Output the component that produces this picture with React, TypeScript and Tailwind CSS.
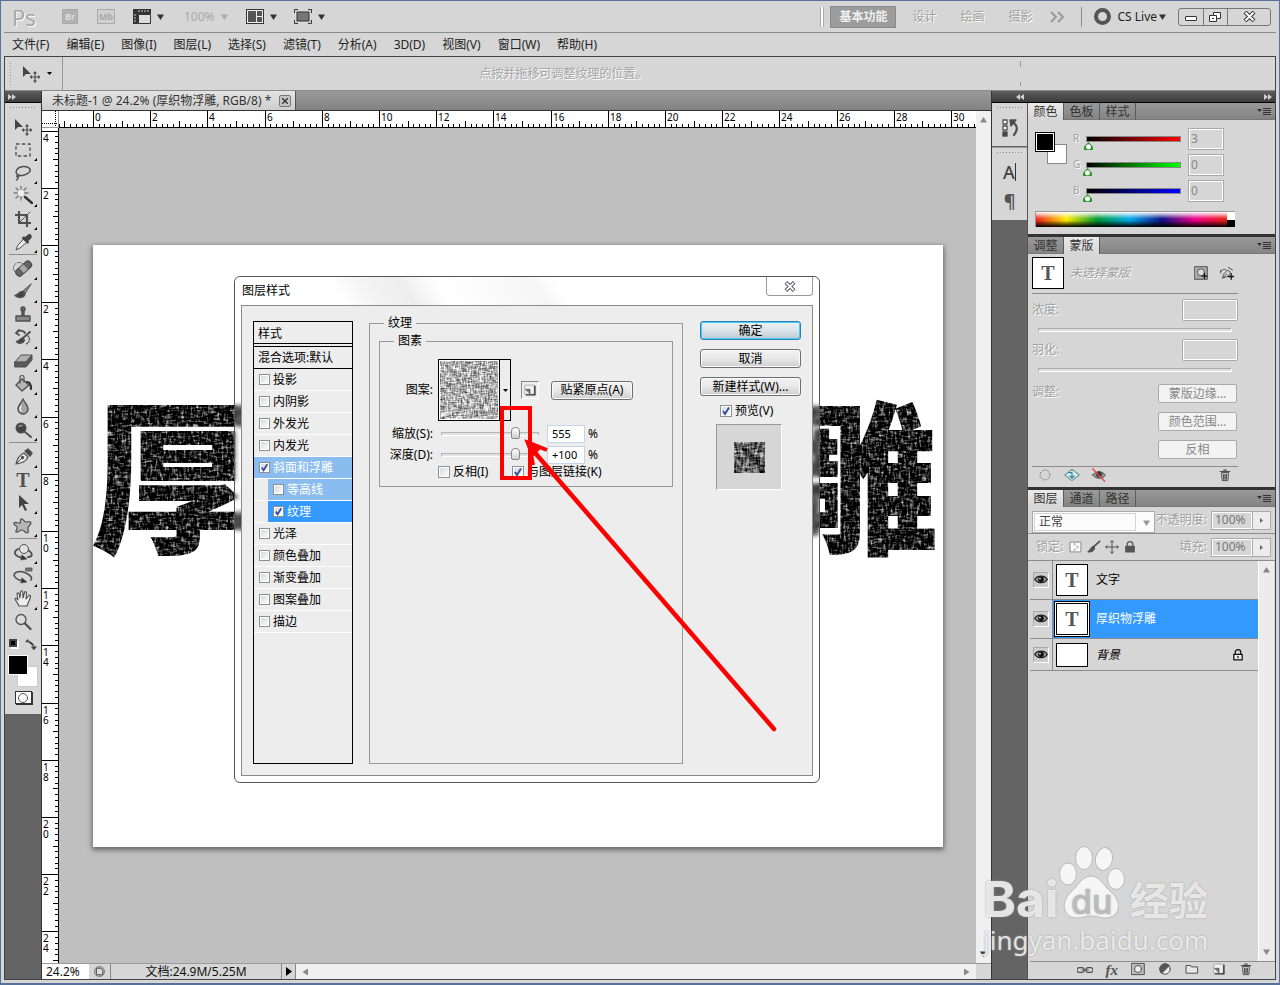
import { useState } from 'react';
import type { ReactNode } from 'react';

const MENUS = ['文件(F)', '编辑(E)', '图像(I)', '图层(L)', '选择(S)', '滤镜(T)', '分析(A)', '3D(D)', '视图(V)', '窗口(W)', '帮助(H)'];

const EFFECTS = [
  { name: '投影', checked: false, tone: 'plain', child: false },
  { name: '内阴影', checked: false, tone: 'plain', child: false },
  { name: '外发光', checked: false, tone: 'plain', child: false },
  { name: '内发光', checked: false, tone: 'plain', child: false },
  { name: '斜面和浮雕', checked: true, tone: 'parent', child: false },
  { name: '等高线', checked: false, tone: 'parent', child: true },
  { name: '纹理', checked: true, tone: 'active', child: true },
  { name: '光泽', checked: false, tone: 'plain', child: false },
  { name: '颜色叠加', checked: false, tone: 'plain', child: false },
  { name: '渐变叠加', checked: false, tone: 'plain', child: false },
  { name: '图案叠加', checked: false, tone: 'plain', child: false },
  { name: '描边', checked: false, tone: 'plain', child: false },
];

const TONES: Record<string, string> = {
  plain: '',
  parent: 'bg-[#8abcf0] text-white',
  active: 'bg-[#3399ff] text-white',
};

const CHANNELS = [
  { name: 'R', value: 3, track: '[&::-webkit-slider-runnable-track]:bg-[linear-gradient(to_right,#000,#f00)]' },
  { name: 'G', value: 0, track: '[&::-webkit-slider-runnable-track]:bg-[linear-gradient(to_right,#000,#0f0)]' },
  { name: 'B', value: 0, track: '[&::-webkit-slider-runnable-track]:bg-[linear-gradient(to_right,#000,#00f)]' },
];

// Distance in px between two numbered ruler marks
const STEP = 57.2;

const Icon = ({ children, size = 20, className = '' }: { children: ReactNode; size?: number; className?: string }) => (
  <svg
    width={size}
    height={size}
    viewBox="0 0 20 20"
    fill="none"
    stroke="#505050"
    strokeWidth="1.4"
    strokeLinecap="round"
    strokeLinejoin="round"
    className={`shrink-0 ${className}`}
  >
    {children}
  </svg>
);

const Caret = ({ className = 'text-[#333]' }: { className?: string }) => (
  <svg width="7" height="6" viewBox="0 0 7 6" className={`shrink-0 ${className}`}>
    <path d="M0 0.5h7L3.5 6z" fill="currentColor" />
  </svg>
);

const DoubleArrow = ({ flip = false }: { flip?: boolean }) => (
  <svg width="8" height="6" viewBox="0 0 8 6" className={flip ? 'rotate-180' : ''}>
    <path d="M0 0l4 3-4 3zM4 0l4 3-4 3z" fill="#d0d0d0" />
  </svg>
);

const Grip = () => (
  <div className="h-1 w-7 bg-[radial-gradient(#8a8a8a_1px,transparent_1px)] bg-[size:3px_3px]"></div>
);

const MoveGlyph = () => (
  <Icon>
    <path d="M2 2v11l3-3h5z" fill="#444" stroke="none" />
    <path d="M14 8v9M10 13h8M13 9l1-1 1 1M13 17l1 1 1-1M10.500 12l-1 1 1 1M17.500 12l1 1-1 1" strokeWidth="1.200" />
  </Icon>
);

const TOOL_GROUPS: { name: string; art: ReactNode; more?: boolean }[][] = [
  [
    { name: '移动工具', art: <MoveGlyph /> },
    { name: '矩形选框工具', more: true, art: <Icon><rect x="3" y="4" width="14" height="12" strokeDasharray="3.4 2.4" strokeLinecap="butt" /></Icon> },
    { name: '套索工具', more: true, art: <Icon><path d="M5 12C1 9 4 4 10 3.500c6-.5 9 3 6 6-3 3-8 3.500-11 2.500zM5 12c-2 0-1.500 2.500 0 2s1-2 0-2M4.500 14c1 1 .5 2-1 3" /></Icon> },
    {
      name: '魔棒工具', more: true,
      art: (
        <Icon>
          <circle cx="8" cy="7" r="4" fill="#eee" stroke="#aaa" strokeWidth=".8" />
          <path d="M8 0v3M8 11v3M1 7h3M12 7h3M3 2l2 2M13 2l-2 2M3 12l2-2" stroke="#777" strokeDasharray="1.500 1.200" />
          <path d="M12 11l7 6" stroke="#333" strokeWidth="2.400" />
        </Icon>
      ),
    },
    { name: '裁剪工具', more: true, art: <Icon><path d="M6 2v12h12M2 6h12v12" strokeWidth="2.200" strokeLinecap="butt" /><path d="M17 3L7 13" strokeWidth="1" /></Icon> },
    {
      name: '吸管工具', more: true,
      art: (
        <Icon>
          <path d="M11 7l3 3-7 6-4 2 1.500-4z" fill="#eee" strokeWidth="1" />
          <path d="M9.500 6l5 5 1-1-1-1 3-3c1.500-1.500 0-4-2-3l-3.500 3-1-1z" fill="#444" stroke="#444" />
        </Icon>
      ),
    },
  ],
  [
    {
      name: '污点修复画笔工具', more: true,
      art: (
        <Icon>
          <circle cx="6" cy="9" r="5.500" strokeWidth="1" strokeDasharray="1 1.600" />
          <g transform="rotate(-42 11 10)">
            <rect x="2" y="6" width="18" height="7" rx="3" fill="#666" />
            <rect x="8" y="6" width="6" height="7" fill="#aaa" strokeWidth=".6" />
          </g>
        </Icon>
      ),
    },
    { name: '画笔工具', more: true, art: <Icon><path d="M18 2l-8 7 2 2z" fill="#888" strokeWidth="1" /><path d="M9.500 9.500c-3-.5-4 3-7.500 4 3 3 9 2.500 10-1.500z" fill="#444" /></Icon> },
    { name: '仿制图章工具', more: true, art: <Icon><circle cx="10" cy="4" r="2" fill="#666" /><path d="M9 6h2v5H9z" fill="#555" /><path d="M3 11h14v5H3z" fill="#888" /></Icon> },
    {
      name: '历史记录画笔工具', more: true,
      art: (
        <Icon>
          <path d="M3 5c4-4 8-2 9 0M6 2L3 5l3 2" strokeWidth="1.800" />
          <path d="M17 4l-7 6" strokeWidth="2" />
          <path d="M9.500 10c-2 0-3 3-6 3.500 2 3 7 2 8-1.500z" fill="#444" />
          <path d="M15 8c3 3 1 7-2 8" strokeDasharray="1 1.800" />
        </Icon>
      ),
    },
    { name: '橡皮擦工具', more: true, art: <Icon><path d="M2 11l6-7h11l-6 7z" fill="#b0b0b0" strokeWidth="1" /><path d="M2 11h11l6-7v5l-6 7H2z" fill="#5a5a5a" strokeWidth="1" /></Icon> },
    {
      name: '油漆桶工具', more: true,
      art: (
        <Icon>
          <path d="M9 5l7 6-7 6-6-6z" fill="#b5b5b5" />
          <path d="M7 9V3c0-2 4-2 4 0v5" strokeWidth="1.200" />
          <path d="M14 8c3 0 4 3 4 7" strokeWidth="2.200" stroke="#333" />
        </Icon>
      ),
    },
    { name: '模糊工具', more: true, art: <Icon><path d="M10 2c2 4 5 7 5 10a5 5 0 01-10 0c0-3 3-6 5-10z" fill="#a5a5a5" /><path d="M8 9c-1 2-1 4 0 5" stroke="#eee" /></Icon> },
    { name: '减淡工具', more: true, art: <Icon><circle cx="8" cy="8" r="4.800" fill="#444" /><path d="M12 12l6 5" strokeWidth="2" /><path d="M6 6.500c1-1 2-1 3-1" stroke="#999" /></Icon> },
  ],
  [
    {
      name: '钢笔工具', more: true,
      art: (
        <Icon>
          <path d="M3 17c1-5 3-9 8-11l4 4c-2 5-6 6-12 7z" fill="#e4e4e4" strokeWidth="1.200" />
          <path d="M12 4l3-2 4 4-2 3z" fill="#444" />
          <path d="M3 17l6-6" strokeWidth="1" />
          <circle cx="9.500" cy="10.500" r="1" fill="#444" />
        </Icon>
      ),
    },
    { name: '横排文字工具', more: true, art: <span className="font-['Liberation_Serif',serif] text-xl leading-5 font-bold text-[#505050]">T</span> },
    { name: '路径选择工具', more: true, art: <Icon><path d="M6 2v13l3-3 3 6 2-1-3-6h5z" fill="#444" stroke="none" /></Icon> },
    { name: '自定形状工具', more: true, art: <Icon><path d="M8 3c2-1 3 3 5 3s5-1 5 1-3 3-3 5 1 5-1 5-3-3-5-3-5 3-6 2 2-3 1-5-4-2-3-4 5 1 6 0 0-3 1-4z" fill="#b5b5b5" strokeWidth="1.200" /></Icon> },
  ],
  [
    {
      name: '3D 对象旋转工具', more: true,
      art: (
        <Icon>
          <path d="M5 6c-6 3-3 8 6 9M15 7c6 4 4 7 0 7" strokeWidth="1.800" />
          <circle cx="11" cy="6" r="4.500" fill="#e2e2e2" strokeWidth="1" />
          <path d="M9 12l5 4-6 1z" fill="#333" strokeWidth=".6" />
        </Icon>
      ),
    },
    {
      name: '3D 旋转相机工具', more: true,
      art: (
        <Icon>
          <path d="M11 15C2 14-2 8 4 6s17 4 14 8" strokeWidth="1.600" />
          <path d="M9 12l5 4-6 1z" fill="#333" strokeWidth=".6" />
          <path d="M13 2h6v3h-6z" fill="#777" strokeWidth=".8" />
        </Icon>
      ),
    },
    { name: '抓手工具', more: true, art: <Icon><path d="M6 17c-1-3-4-6-4-7s2-1 3 1L4 5c0-1.500 2-1.500 2.200 0L7 9l.5-6c.1-1.600 2-1.600 2.200 0l.3 6 1.500-5.500c.5-1.400 2.200-1 2 .5L13 10l2.500-3c1-1.200 2.500-.2 2 1L14 17z" fill="#eee" strokeWidth="1.100" /></Icon> },
    { name: '缩放工具', art: <Icon><circle cx="8" cy="7.500" r="5" fill="#ddd" strokeWidth="1.300" /><path d="M12 11.500l5.500 5.500" strokeWidth="2.400" /></Icon> },
  ],
];

const EyeIcon = () => (
  <Icon size={14}>
    <path d="M1 9c4-6 14-6 18 0-3 6-13 7-18 0z" fill="#999" stroke="#222" strokeWidth="1.800" />
    <circle cx="10" cy="9" r="4" fill="#111" stroke="none" />
    <circle cx="8.500" cy="8" r="1.200" fill="#fff" stroke="none" />
  </Icon>
);

const LockIcon = ({ solid = false }: { solid?: boolean }) => (
  <Icon size={14}>
    <rect x="4" y="9" width="12" height="8" fill={solid ? '#555' : '#eee'} stroke={solid ? '#555' : '#111'} strokeWidth="1.800" />
    <path d="M6 9V6c0-5 8-5 8 0v3M10 12v2" stroke={solid ? '#555' : '#111'} strokeWidth="1.800" />
  </Icon>
);

const TrashIcon = () => (
  <Icon size={14}>
    <path d="M5 7l1 11h8l1-11z" fill="#ccc" />
    <path d="M3 5h14M8 3h4M8 9v7M10 9v7M12 9v7" strokeWidth="1.500" />
  </Icon>
);

const NewIcon = () => (
  <Icon size={14}>
    <path d="M3 3h13v13H3z" fill="#f2f2f2" stroke="#999" strokeWidth="1" />
    <path d="M4 9h6v6z" fill="#777" strokeWidth="1" />
    <path d="M17 4v13H4" stroke="#333" strokeWidth="2" strokeLinecap="butt" />
  </Icon>
);

const CheckBox = ({ id, label, checked = false, size = 'size-3' }: { id: string; label: string; checked?: boolean; size?: string }) => {
  const [on, setOn] = useState(checked);

  return (
    <span className="flex items-center gap-[3px]">
      <span className="relative flex shrink-0">
        <input
          id={id}
          type="checkbox"
          checked={on}
          onChange={() => setOn(!on)}
          className={`${size} appearance-none border border-[#8e8f8f] bg-linear-to-br from-[#d2d6da] to-white outline-1 -outline-offset-2 outline-white`}
        />
        {on && (
          <svg viewBox="0 0 12 12" className={`pointer-events-none absolute inset-0 ${size}`}>
            <path d="M3 6l2 3 4-6.500" fill="none" stroke="#3a4f9b" strokeWidth="2" />
          </svg>
        )}
      </span>
      <label htmlFor={id} className="leading-3 whitespace-nowrap">{label}</label>
    </span>
  );
};

const DialogButton = ({ children, primary = false, className = '' }: { children: ReactNode; primary?: boolean; className?: string }) => (
  <button
    className={`flex h-[19px] items-center justify-center rounded-[3px] border leading-4 whitespace-nowrap ${
      primary
        ? 'border-[#2f80b4] bg-linear-to-b from-[#eaf2f6] via-[#dbe3e8] to-[#bcc9d2] shadow-[inset_0_0_0_1px_#48cdf5]'
        : 'border-[#707070] bg-linear-to-b from-[#f2f2f2] via-[#e8e8e8] to-[#cfcfcf] shadow-[inset_0_0_0_1px_#fbfbfb]'
    } ${className}`}
  >
    {children}
  </button>
);

const AppBar = () => (
  <header className="flex h-8 items-center border-b border-[#8c8c8c] pr-[5px] pl-2">
    <span className="w-[50px] font-['Open_Sans',sans-serif] text-[22px] leading-7 text-[#a5a5a5] [text-shadow:1px_1px_0_#fff]">Ps</span>
    <button className="mr-[19px] h-[15px] w-4 border border-[#aaa] bg-[#b2b2b2] text-[9px] leading-3 font-bold text-[#dedede]">Br</button>
    <button className="mr-[18px] h-[15px] w-[18px] border border-[#aaa] bg-[#d0d0d0] text-[9px] leading-3 font-bold text-[#aaa]">Mb</button>
    <button aria-label="查看额外内容" className="mr-5 flex items-center gap-1.5">
      <svg width="18" height="15" viewBox="0 0 18 15">
        <path d="M0 0h18v5H5v10H0z" fill="#333" />
        <path d="M5.500 5.500h12v9h-12z" fill="#ddd" stroke="#333" />
        <path d="M6 1v2M9 1v2M12 1v2M15 1v2M1 6h2M1 9h2M1 12h2" stroke="#ccc" />
      </svg>
      <Caret />
    </button>
    <button className="mr-[18px] flex items-center gap-1.5 text-[#a8a8a8]">
      100% <Caret className="text-[#aaa]" />
    </button>
    <button aria-label="排列文档" className="mr-[17px] flex items-center gap-1.5">
      <svg width="18" height="15" viewBox="0 0 18 15">
        <rect x=".5" y=".5" width="17" height="14" fill="#eee" stroke="#333" />
        <path d="M2 2h8v11H2zM11 2h5v5h-5zM11 8h5v5h-5z" fill="#555" />
      </svg>
      <Caret />
    </button>
    <button aria-label="屏幕模式" className="flex items-center gap-1.5">
      <svg width="18" height="15" viewBox="0 0 18 15">
        <path d="M.5 4V.5H4M14 .5h3.500V4M17.500 11v3.500H14M4 14.500H.5V11" fill="none" stroke="#333" />
        <rect x="3" y="3" width="12" height="9" fill="#777" stroke="#333" />
      </svg>
      <Caret />
    </button>

    <div className="ml-auto flex items-center">
      <div className="mr-1.5 h-5 w-1 border-x border-[#aaa] bg-white"></div>
      <button className="mr-4 h-[22px] w-[66px] border border-[#8a8a8a] bg-[#9c9c9c] font-bold text-[#f0f0f0]">基本功能</button>
      <button className="mr-6 text-[#a0a0a0] [text-shadow:1px_1px_0_#fff]">设计</button>
      <button className="mr-6 text-[#a0a0a0] [text-shadow:1px_1px_0_#fff]">绘画</button>
      <button className="mr-[18px] text-[#a0a0a0] [text-shadow:1px_1px_0_#fff]">摄影</button>
      <svg width="15" height="12" viewBox="0 0 15 12" className="mr-4">
        <path d="M1 1l5 5-5 5M8 1l5 5-5 5" fill="none" stroke="#999" strokeWidth="2" />
      </svg>
      <div className="mr-3 h-5 w-px bg-[#8c8c8c]"></div>
      <div className="mr-1.5 size-[17px] rounded-full border-4 border-[#555]"></div>
      <button className="mr-3 flex items-center gap-0.5 text-[#222]">CS Live <Caret /></button>
      <div className="flex h-[18px] w-[93px] rounded-[3px] border border-[#777]">
        <button aria-label="最小化" className="grid flex-1 place-items-center border-r border-[#777]">
          <span className="mt-1 h-[5px] w-3 rounded-[1px] border border-[#333] bg-white"></span>
        </button>
        <button aria-label="还原" className="grid flex-1 place-items-center border-r border-[#777]">
          <svg width="12" height="12" viewBox="0 0 12 12" fill="#fff" stroke="#333">
            <path d="M4.500 1.500h7v6h-7z" />
            <path d="M.5 4.500h7v6h-7zM3 7.500h2" />
          </svg>
        </button>
        <button aria-label="关闭" className="grid w-[42px] place-items-center">
          <svg width="13" height="11" viewBox="0 0 13 11">
            <path d="M2 1l9 9M11 1l-9 9" stroke="#333" strokeWidth="4" />
            <path d="M2.500 1.500l8 8M10.500 1.500l-8 8" stroke="#fff" strokeWidth="2" />
          </svg>
        </button>
      </div>
    </div>
  </header>
);

const Toolbox = () => (
  <aside className="flex w-[37px] shrink-0 flex-col border-r border-[#333] bg-[#646464]">
    <div className="flex h-3 items-center border-b border-black bg-linear-to-b from-[#5e5e5e] to-[#3c3c3c] px-[3px]">
      <DoubleArrow />
    </div>
    <div className="flex flex-col items-center bg-[#d6d6d6] pt-[3px] pb-2.5">
      <Grip />
      <div className="h-[5px]"></div>
      {TOOL_GROUPS.map((group, i) => (
        <div key={i} className={`flex flex-col items-center ${i ? 'mt-px border-t border-[#8c8c8c] pt-0.5' : ''}`}>
          {group.map((tool) => (
            <button key={tool.name} aria-label={tool.name} className="relative grid h-[23px] w-7 place-items-center">
              {tool.art}
              {tool.more && (
                <svg width="3" height="3" viewBox="0 0 3 3" className="absolute right-0 bottom-0">
                  <path d="M3 0v3H0z" fill="#000" />
                </svg>
              )}
            </button>
          ))}
        </div>
      ))}
      <div className="mt-1.5 flex w-7 justify-between">
        <span className="flex size-2.5">
          <span className="size-2 border-2 border-[#444] bg-black shadow-[2px_2px_0_#fff]"></span>
        </span>
        <Icon size={12}>
          <path d="M4 1L1 5h7zM4 4c8 0 10 4 11 9M11 13h8l-4 5z" fill="#333" strokeWidth="1" />
        </Icon>
      </div>
      <div className="relative mt-1 h-8 w-[30px]">
        <span className="absolute right-0 bottom-0 size-[21px] border border-[#ccc] bg-white"></span>
        <span className="absolute top-0 left-0 size-5 border border-white bg-black"></span>
      </div>
      <button aria-label="以快速蒙版模式编辑" className="mt-1 grid h-[13px] w-[17px] place-items-center border border-[#333] bg-white shadow-[1px_1px_0_#333]">
        <span className="size-2.5 rounded-full border border-[#555]"></span>
      </button>
    </div>
  </aside>
);

const HorizontalRuler = () => (
  <svg width="100%" height="17" className="block bg-white font-['Noto_Sans',sans-serif] text-[10px]">
    {[...Array(165)].map((_, i) => {
      const n = i - 6;
      const x = Math.round(34 + (n * STEP) / 10) + 0.5;
      const top = n % 10 === 0 ? 0 : n % 5 === 0 ? 10 : 13;
      return <path key={i} d={`M${x} ${top}V17`} stroke="#000" />;
    })}
    {[...Array(16)].map((_, i) => (
      <text key={i} x={Math.round(36 + i * STEP)} y="10">{i * 2}</text>
    ))}
    <path d="M0 16.500h2000" stroke="#000" />
  </svg>
);

const VerticalRuler = () => (
  <svg width="17" height="100%" className="block w-[17px] shrink-0 bg-white font-['Noto_Sans',sans-serif] text-[10px]">
    {[...Array(146)].map((_, i) => {
      const n = i - 20;
      const y = Math.round(117 + (n * STEP) / 10) + 0.5;
      const left = n % 10 === 0 ? 0 : n % 5 === 0 ? 11 : 13;
      return <path key={i} d={`M${left} ${y}H17`} stroke="#000" />;
    })}
    {[...Array(15)].map((_, i) => {
      const n = i - 2;
      return String(Math.abs(n * 2)).split('').map((digit, d) => (
        <text key={`${i}-${d}`} x="1" y={Math.round(128 + n * STEP + d * 10)}>{digit}</text>
      ));
    })}
    <path d="M16.500 0v2000" stroke="#000" />
  </svg>
);

// Woven noise used by the headline and by the pattern swatches
const FabricFilters = () => (
  <svg width="0" height="0" className="absolute">
    <filter id="fabric-dark" x="0" y="0" width="100%" height="100%" colorInterpolationFilters="sRGB">
      <feTurbulence type="fractalNoise" baseFrequency="0.450 0.140" numOctaves="2" seed="3" result="v" />
      <feTurbulence type="fractalNoise" baseFrequency="0.140 0.450" numOctaves="2" seed="8" result="h" />
      <feComposite in="v" in2="h" operator="arithmetic" k1="0" k2="0.5" k3="0.5" k4="0" />
      <feColorMatrix values="2.600 0 0 0 -1.220  2.600 0 0 0 -1.220  2.600 0 0 0 -1.220  0 0 0 0 1" />
      <feComposite in2="SourceAlpha" operator="in" />
    </filter>
    <filter id="fabric-light" x="0" y="0" width="100%" height="100%" colorInterpolationFilters="sRGB">
      <feTurbulence type="fractalNoise" baseFrequency="0.700 0.180" numOctaves="2" seed="3" result="v" />
      <feTurbulence type="fractalNoise" baseFrequency="0.180 0.700" numOctaves="2" seed="8" result="h" />
      <feComposite in="v" in2="h" operator="arithmetic" k1="0" k2="0.5" k3="0.5" k4="0" />
      <feColorMatrix values="1.800 0 0 0 -0.220  1.800 0 0 0 -0.220  1.800 0 0 0 -0.220  0 0 0 0 1" />
    </filter>
    <filter id="fabric-mid" x="0" y="0" width="100%" height="100%" colorInterpolationFilters="sRGB">
      <feTurbulence type="fractalNoise" baseFrequency="0.450 0.120" numOctaves="2" seed="3" result="v" />
      <feTurbulence type="fractalNoise" baseFrequency="0.120 0.450" numOctaves="2" seed="8" result="h" />
      <feComposite in="v" in2="h" operator="arithmetic" k1="0" k2="0.5" k3="0.5" k4="0" />
      <feColorMatrix values="2.200 0 0 0 -0.750  2.200 0 0 0 -0.750  2.200 0 0 0 -0.750  0 0 0 0 1" />
    </filter>
  </svg>
);

const DocumentArea = () => (
  <main className="flex min-w-0 flex-1 flex-col">
    <div className="flex h-5 items-stretch border-b border-[#333] bg-linear-to-b from-[#9a9a9a] to-[#828282]">
      <div className="flex items-center gap-2 border-r border-[#555] bg-linear-to-b from-[#e4e4e4] to-[#cdcdcd] pr-1 pl-2.5 text-[#333]">
        <span className="whitespace-nowrap">未标题-1 @ 24.2% (厚织物浮雕, RGB/8) *</span>
        <button aria-label="关闭文档" className="grid size-3 place-items-center rounded-[2px] border border-[#777] bg-[#c4c4c4]">
          <svg width="6" height="6" viewBox="0 0 6 6"><path d="M0 0l6 6M6 0L0 6" stroke="#333" strokeWidth="1.300" /></svg>
        </button>
      </div>
    </div>
    <div className="flex min-h-0 flex-1">
      <div className="flex min-w-0 flex-1 flex-col">
        <div className="flex">
          <svg width="17" height="17" className="shrink-0 bg-white">
            <path d="M13.500 0v17M0 12.500h17" stroke="#000" strokeDasharray="1 1" />
            <path d="M16.500 0v17M0 16.500h17" stroke="#999" />
          </svg>
          <HorizontalRuler />
        </div>
        <div className="flex min-h-0 flex-1">
          <VerticalRuler />
          <div className="grid min-w-0 flex-1 place-items-center overflow-hidden bg-[#bfbfbf]">
            <div className="h-[602px] w-[850px] bg-white shadow-[0_2px_5px_1px_#666]">
              <svg width="100%" height="100%" viewBox="0 0 850 602" className="overflow-visible font-['Noto_Sans_CJK_SC',sans-serif] text-[165px] font-black">
                <text x="-2" y="296" filter="url(#fabric-dark)">厚</text>
                <text x="680" y="296" filter="url(#fabric-dark)">雕</text>
              </svg>
            </div>
          </div>
        </div>
      </div>
      <div className="flex w-[15px] shrink-0 flex-col items-center justify-between bg-[#f0f0f0] py-1.5 text-[#888]">
        <Caret className="rotate-180" />
        <Caret />
      </div>
    </div>
    <footer className="flex h-4 items-stretch border-t border-[#999] bg-[#d6d6d6] text-[#111]">
      <input aria-label="缩放比例" defaultValue="24.2%" className="w-[47px] bg-white pl-1 text-xs leading-3" />
      <span className="grid w-[22px] place-items-center border-r border-[#888]">
        <Icon size={13}><circle cx="10" cy="10" r="8" fill="#aaa" stroke="#888" /><path d="M6 5h6l3 4v6H6z" fill="#ddd" /></Icon>
      </span>
      <span className="flex w-[171px] items-center justify-center border-r border-[#888] leading-3">文档:24.9M/5.25M</span>
      <button aria-label="显示状态" className="grid w-3.5 place-items-center border-r border-[#888]">
        <svg width="6" height="9" viewBox="0 0 6 9"><path d="M0 0l6 4.500L0 9z" /></svg>
      </button>
      <div className="flex flex-1 items-center justify-between bg-[#f0f0f0] px-1.5 text-[#888]">
        <Caret className="rotate-90" />
        <Caret className="-rotate-90" />
      </div>
      <div className="w-[15px]"></div>
    </footer>
  </main>
);

const PanelTabs = ({ tabs, active }: { tabs: string[]; active: string }) => (
  <div className="flex h-[17px] border-b border-[#777] bg-linear-to-b from-[#9a9a9a] to-[#848484]">
    {tabs.map((tab) => (
      <button
        key={tab}
        className={`h-[17px] w-9 border-r border-[#5c5c5c] leading-[18px] text-[#333] ${tab === active ? 'bg-linear-to-b from-[#eaeaea] to-[#d6d6d6]' : ''}`}
      >
        {tab}
      </button>
    ))}
    <button aria-label="面板菜单" className="mr-1 ml-auto">
      <svg width="14" height="9" viewBox="0 0 14 9">
        <path d="M0 2h5L2.500 5z" fill="#333" />
        <path d="M6 1.500h8M6 3.500h8M6 5.500h8M6 7.500h8" stroke="#333" />
      </svg>
    </button>
  </div>
);

const ColorPanel = () => (
  <section className="flex h-[131px] flex-col">
    <PanelTabs tabs={['颜色', '色板', '样式']} active="颜色" />
    <div className="flex-1 px-[7px] pt-2">
      <div className="flex">
        <div className="relative mt-1 h-8 w-[38px]">
          <span className="absolute top-3 left-3 size-5 border border-[#888] bg-white"></span>
          <span className="absolute top-0 left-0 size-5 border border-black bg-black outline-1 -outline-offset-2 outline-white"></span>
        </div>
        <div className="space-y-1">
          {CHANNELS.map((c) => (
            <div key={c.name} className="flex h-[22px] items-center">
              <label htmlFor={`channel-${c.name}`} className="w-[10px] text-[10px] text-[#a0a0a0] [text-shadow:1px_1px_0_#fff]">{c.name}</label>
              <input
                id={`channel-${c.name}`}
                type="range"
                min="0"
                max="255"
                defaultValue={c.value}
                className={`mr-1 h-[22px] w-[101px] appearance-none bg-transparent [&::-webkit-slider-runnable-track]:mx-[3px] [&::-webkit-slider-runnable-track]:h-1.5 [&::-webkit-slider-runnable-track]:border [&::-webkit-slider-runnable-track]:border-[#888] [&::-webkit-slider-thumb]:-ml-1 [&::-webkit-slider-thumb]:mt-[5px] [&::-webkit-slider-thumb]:h-2 [&::-webkit-slider-thumb]:w-[9px] [&::-webkit-slider-thumb]:appearance-none [&::-webkit-slider-thumb]:bg-[radial-gradient(circle_at_50%_60%,#fff_30%,#2a9a2a_45%)] [&::-webkit-slider-thumb]:[clip-path:polygon(50%_0,100%_60%,100%_100%,0_100%,0_60%)] ${c.track}`}
              />
              <input aria-label={c.name} defaultValue={c.value} className="h-[22px] w-9 border border-[#aaa] bg-[#d6d6d6] pb-0.5 pl-0.5 text-[#888] outline-1 -outline-offset-2 outline-white" />
            </div>
          ))}
        </div>
      </div>
      <div className="mt-[9px] flex h-4 w-[200px] border-t border-l border-[#999]">
        <div className="flex-1 bg-[linear-gradient(to_bottom,#fff,transparent_45%,transparent_55%,#000),linear-gradient(to_right,#e22,#fe0_16%,#093_32%,#0ae_49%,#118_66%,#e08_83%,#e21)]"></div>
        <div className="w-2 bg-[linear-gradient(#fff_50%,#000_50%)]"></div>
      </div>
    </div>
  </section>
);

const MaskButton = ({ children }: { children: ReactNode }) => (
  <button className="h-[19px] w-[79px] rounded-[2px] border border-[#aaa] bg-[#f3f3f3] leading-4 text-[#888]">{children}</button>
);

const MaskPanel = () => (
  <section className="flex h-[250px] flex-col">
    <PanelTabs tabs={['调整', '蒙版']} active="蒙版" />
    <div className="w-[210px] flex-1 pt-[3px] pl-1">
      <div className="flex items-center">
        <div className="grid size-8 place-items-center border border-black bg-white font-['Liberation_Serif',serif] text-xl font-bold text-[#555]">T</div>
        <span className="ml-1.5 flex-1 text-[#a0a0a0] italic [text-shadow:1px_1px_0_#fff]">未选择蒙版</span>
        <button aria-label="添加像素蒙版" className="mr-3">
          <Icon size={14}>
            <rect x="1" y="1" width="18" height="18" fill="#aaa" />
            <circle cx="10" cy="9" r="5" fill="#ddd" />
            <path d="M15 11v7M11.500 14.500h7" stroke="#111" strokeWidth="1.800" />
          </Icon>
        </button>
        <button aria-label="添加矢量蒙版" className="mr-1">
          <Icon size={14}>
            <path d="M1 8c3-4 6-4 8-2M12 2l6 4M4 17c0-5 3-8 7-11l4 3c-1 5-5 7-11 8zM4 17l6-6M1 6v4" />
            <path d="M16 11v8M12 15h8" stroke="#111" strokeWidth="1.800" />
          </Icon>
        </button>
      </div>
      <div className="mt-1 border-t border-[#8c8c8c] pt-[5px] text-[#a0a0a0] [text-shadow:1px_1px_0_#fff]">
        {['浓度:', '羽化:'].map((name, i) => (
          <div key={name} className="h-10">
            <div className="flex items-center justify-between">
              <label htmlFor={`mask-value-${i}`}>{name}</label>
              <input id={`mask-value-${i}`} disabled className="h-[22px] w-14 rounded-[2px] border border-[#aaa] bg-[#d6d6d6] outline-1 -outline-offset-2 outline-white" />
            </div>
            <input
              type="range"
              disabled
              aria-label={name}
              className="mx-1.5 mt-[7px] block h-1 w-[194px] appearance-none border border-[#aaa] border-r-white border-b-white bg-[#dde0e0] [&::-webkit-slider-thumb]:size-0 [&::-webkit-slider-thumb]:appearance-none"
            />
          </div>
        ))}
        <div className="flex justify-between pt-[5px]">
          <span>调整:</span>
          <div className="mr-px flex flex-col gap-[9px] [text-shadow:none]">
            <MaskButton>蒙版边缘...</MaskButton>
            <MaskButton>颜色范围...</MaskButton>
            <MaskButton>反相</MaskButton>
          </div>
        </div>
      </div>
      <div className="mt-[7px] flex items-center gap-3 border-t border-[#8c8c8c] px-1.5">
        <Icon size={14}><circle cx="10" cy="10" r="7" strokeDasharray="1.500 2.500" stroke="#777" /></Icon>
        <Icon size={16}>
          <path d="M1 10l9-7 9 7-9 7z" fill="#dff0ea" stroke="#6b9b8c" />
          <path d="M6 7h4v6M7 11l3 3 3-3" stroke="#27a" />
        </Icon>
        <Icon size={14}>
          <path d="M1 10c4-6 14-6 18 0-3 6-13 7-18 0z" fill="#999" />
          <circle cx="10" cy="9" r="4" fill="#333" />
          <path d="M1 1l17 18" stroke="#e44" strokeWidth="1.800" />
        </Icon>
        <span className="ml-auto"><TrashIcon /></span>
      </div>
    </div>
  </section>
);

const PercentField = ({ id, label }: { id: string; label: string }) => (
  <div className="flex items-center gap-1">
    <label htmlFor={id} className="whitespace-nowrap text-[#a0a0a0] [text-shadow:1px_1px_0_#fff]">{label}</label>
    <div className="flex h-[19px] w-[60px] border border-[#aaa]">
      <input id={id} defaultValue="100%" className="w-10 border border-white bg-[#d6d6d6] pl-0.5 text-xs text-[#777]" />
      <button aria-label={`${label}滑块`} className="grid flex-1 place-items-center border-l border-[#aaa] bg-[#ececec]">
        <svg width="3" height="5" viewBox="0 0 3 5"><path d="M0 0l3 2.500L0 5z" fill="#666" /></svg>
      </button>
    </div>
  </div>
);

const LAYERS = [
  { name: '文字', text: true },
  { name: '厚织物浮雕', text: true },
  { name: '背景', text: false },
];

const LayersPanel = () => {
  const [selected, setSelected] = useState('厚织物浮雕');

  return (
    <section className="flex min-h-0 flex-1 flex-col">
      <PanelTabs tabs={['图层', '通道', '路径']} active="图层" />
      <div className="flex h-[27px] items-center justify-between border-b border-[#8c8c8c] pr-1 pl-1">
        <div className="relative mt-1 flex h-[22px] w-[123px] border border-[#aaa] bg-[#fcfcfc]">
          <select aria-label="混合模式" className="w-full appearance-none pl-1.5 text-[#444]">
            <option>正常</option>
          </select>
          <span className="pointer-events-none absolute inset-y-px left-px w-[102px] border border-[#d4d4d4]"></span>
          <Caret className="pointer-events-none absolute top-2 right-1 text-[#999]" />
        </div>
        <PercentField id="opacity" label="不透明度:" />
      </div>
      <div className="flex h-[27px] items-center justify-between border-b border-[#8c8c8c] pr-1 pl-2">
        <div className="flex items-center gap-1">
          <span className="mr-0.5 text-[#a0a0a0] [text-shadow:1px_1px_0_#fff]">锁定:</span>
          <Icon size={14}><rect x="2" y="3" width="15" height="14" fill="#fff" stroke="#888" /><path d="M6 4h4v4H6zM10 8h4v4h-4zM6 12h4v4H6z" fill="#ccc" stroke="none" /></Icon>
          <Icon size={14}><path d="M18 2L8 11" strokeWidth="2.500" /><path d="M9 9c-3 0-4 5-8 8 5 1 9-1 10-5z" fill="#555" /></Icon>
          <Icon size={14}><path d="M10 1v18M1 10h18M8 3l2-2 2 2M8 17l2 2 2-2M3 8l-2 2 2 2M17 8l2 2-2 2" /></Icon>
          <LockIcon solid />
        </div>
        <PercentField id="fill" label="填充:" />
      </div>
      <div className="flex min-h-0 flex-1 pl-0.5">
        <ul className="flex-1">
          {LAYERS.map((layer) => (
            <li key={layer.name} className="flex border-b border-[#8c8c8c]">
              <button aria-label="可见性" className="grid w-[23px] place-items-center border-r border-[#8c8c8c]">
                <span className="grid size-4 place-items-center border border-[#aaa] border-r-white border-b-white bg-[#ccc]"><EyeIcon /></span>
              </button>
              <button
                onClick={() => setSelected(layer.name)}
                className={`flex flex-1 items-center px-[3px] text-left ${layer.text ? 'h-[38px]' : 'h-[31px]'} ${selected === layer.name ? 'bg-[#3399ff] text-white' : 'text-black'}`}
              >
                <span
                  className={`grid w-8 place-items-center border border-black bg-white font-['Liberation_Serif',serif] text-xl font-bold text-[#555] ${layer.text ? 'h-8' : 'h-6'} ${selected === layer.name ? 'ring-1 ring-white outline-1 outline-offset-1 outline-black' : ''}`}
                >
                  {layer.text ? 'T' : ''}
                </span>
                <span className={`ml-2 flex-1 ${layer.text ? '' : 'italic'}`}>{layer.name}</span>
                {!layer.text && <span className="mr-2.5"><LockIcon /></span>}
              </button>
            </li>
          ))}
        </ul>
        <div className="mr-px flex w-4 flex-col items-center justify-between border-l border-white bg-[#ececec] py-1.5">
          <Caret className="rotate-180 text-[#888]" />
          <Caret className="text-[#888]" />
        </div>
      </div>
      <div className="ml-0.5 flex h-[18px] items-start justify-end gap-[13px] border-t border-[#8c8c8c] pr-[22px]">
        <Icon size={16}><rect x="0" y="7" width="9" height="6" rx="3" /><rect x="11" y="7" width="9" height="6" rx="3" /><path d="M6 10h8" /></Icon>
        <span className="font-['Liberation_Serif',serif] text-[15px] leading-4 font-bold text-[#555] italic">fx</span>
        <Icon size={14}><rect x="1" y="2" width="18" height="16" fill="#bbb" /><circle cx="10" cy="10" r="5" fill="#eee" /></Icon>
        <Icon size={14}><circle cx="10" cy="10" r="7.500" fill="#eee" /><path d="M16 5A7.500 7.500 0 105 16z" fill="#555" /></Icon>
        <Icon size={14}><path d="M2 5h6l1 2h9v9H2z" fill="#e6e6e6" /></Icon>
        <NewIcon />
        <TrashIcon />
      </div>
    </section>
  );
};

const Dock = () => (
  <aside className="flex w-[284px] shrink-0 flex-col border-l border-[#333] bg-[#646464]">
    <div className="flex h-3 items-center justify-between border-b border-black bg-linear-to-b from-[#5e5e5e] to-[#3c3c3c] pr-[3px] pl-6">
      <DoubleArrow flip />
      <DoubleArrow />
    </div>
    <div className="flex min-h-0 flex-1">
      <div className="w-9 shrink-0 border-r border-[#555]">
        <div className="flex h-[43px] flex-col items-center bg-[#d6d6d6] pt-[3px]">
          <Grip />
          <button aria-label="历史记录" className="mt-2">
            <Icon>
              <path d="M3 2h4v4H3zM3 8h4v4H3z" fill="#fff" strokeWidth="1.300" />
              <path d="M3 14h4v4H3z" fill="#444" />
              <path d="M12 4c6 3 6 8 2 13" strokeWidth="2.200" />
              <path d="M10 2h6l-5 6z" fill="#444" />
            </Icon>
          </button>
        </div>
        <div className="mt-px flex h-[73px] flex-col items-center border-t border-[#999] bg-[#d6d6d6] pt-[3px]">
          <Grip />
          <button aria-label="字符" className="mt-2 h-[18px] border-r border-[#333] text-lg leading-[18px] font-medium text-[#444]">A</button>
          <button aria-label="段落" className="mt-2 text-lg leading-6 font-bold text-[#555]">¶</button>
        </div>
      </div>
      <div className="flex min-w-0 flex-1 flex-col gap-[3px] bg-[#333] *:bg-[#d6d6d6]">
        <ColorPanel />
        <MaskPanel />
        <LayersPanel />
      </div>
    </div>
  </aside>
);

const sliderClass =
  'h-3.5 w-[98px] appearance-none bg-transparent [&::-webkit-slider-runnable-track]:h-1 [&::-webkit-slider-runnable-track]:border [&::-webkit-slider-runnable-track]:border-[#b5b5b5] [&::-webkit-slider-runnable-track]:border-b-white [&::-webkit-slider-runnable-track]:bg-[#e0e3e3] [&::-webkit-slider-thumb]:-mt-[6px] [&::-webkit-slider-thumb]:h-3 [&::-webkit-slider-thumb]:w-[9px] [&::-webkit-slider-thumb]:appearance-none [&::-webkit-slider-thumb]:rounded-t-[4px] [&::-webkit-slider-thumb]:rounded-b-[2px] [&::-webkit-slider-thumb]:border [&::-webkit-slider-thumb]:border-[#888] [&::-webkit-slider-thumb]:bg-linear-to-b [&::-webkit-slider-thumb]:from-white [&::-webkit-slider-thumb]:to-[#d0d0d0]';

const SliderRow = ({ id, label, value, max, position }: { id: string; label: string; value: string; max: number; position: number }) => (
  <>
    <label htmlFor={id} className="text-right whitespace-nowrap">{label}</label>
    <div className="flex h-[21px] items-center pl-[3px]">
      <input id={id} type="range" min="0" max={max} defaultValue={position} className={sliderClass} />
      <input aria-label={label} defaultValue={value} className="ml-2 h-[18px] w-[38px] border border-[#c5d4e8] bg-white pl-1 text-[11px] leading-4" />
      <span className="ml-[3px]">%</span>
    </div>
  </>
);

const LayerStyleDialog = () => (
  <div
    role="dialog"
    aria-label="图层样式"
    className="absolute top-[275px] left-[233px] w-[586px] rounded-md border border-[#555] bg-white/20 px-1.5 pb-1.5 text-black backdrop-blur-[2px]"
  >
    <div className="-mx-1.5 flex h-7 items-start justify-between rounded-t-md bg-[linear-gradient(60deg,#fff_18%,#f3f3f3_24%,#eee_30%,#fff_36%,#f6f6f6_52%,#fff_56%)] pr-1.5 pl-[7px]">
      <h2 className="leading-7">图层样式</h2>
      <button aria-label="关闭" className="grid h-[19px] w-[47px] place-items-center rounded-b border border-t-0 border-[#999]">
        <svg width="12" height="11" viewBox="0 0 13 11">
          <path d="M2 1l9 9M11 1l-9 9" stroke="#556" strokeWidth="4" />
          <path d="M2.500 1.500l8 8M10.500 1.500l-8 8" stroke="#fff" strokeWidth="2" />
        </svg>
      </button>
    </div>

    <div className="flex border border-[#8a8a8a] bg-[#ededed] px-[11px] pt-[9px] pb-[11px]">
      <div className="mt-[6px] h-[443px] w-[100px] shrink-0 border border-black">
        <div className="h-[22px] border-b border-black pl-1 leading-6">样式</div>
        <div className="mt-0.5 h-[23px] border-y border-black pl-1 leading-[22px] whitespace-nowrap">混合选项:默认</div>
        {EFFECTS.map((fx) => (
          <div key={fx.name} className={`h-[22px] border-b border-white ${fx.child ? 'pl-3.5' : ''}`}>
            <div className={`flex h-[21px] items-center pl-[5px] ${TONES[fx.tone]}`}>
              <CheckBox id={`fx-${fx.name}`} label={fx.name} checked={fx.checked} size="size-[11px]" />
            </div>
          </div>
        ))}
      </div>

      <fieldset className="ml-4 w-[314px] shrink-0 border border-[#999] px-[9px] pb-2">
        <legend className="ml-[5px] h-4 px-1 leading-4">纹理</legend>
        <fieldset className="mt-0.5 border border-[#999] pb-2">
          <legend className="ml-[14px] h-4 px-1 leading-4">图素</legend>
          <div className="grid grid-cols-[53px_1fr] items-center gap-x-[5px] pt-2.5">
            <span className="text-right">图案:</span>
            <div className="flex items-center">
              <button aria-label="图案拾色器" className="flex h-[62px] w-[73px] border border-black bg-white">
                <svg width="58" height="58" className="m-px"><rect width="58" height="58" filter="url(#fabric-light)" /></svg>
                <span className="grid flex-1 place-items-center self-stretch border-l border-black bg-[#ededed]">
                  <svg width="5" height="3" viewBox="0 0 5 3"><path d="M0 0h5L2.500 3z" /></svg>
                </span>
              </button>
              <button aria-label="创建新预设" className="ml-2.5 grid size-[18px] place-items-center border border-[#888] border-r-white border-b-white">
                <NewIcon />
              </button>
              <DialogButton className="ml-3 w-[82px]">贴紧原点(A)</DialogButton>
            </div>
            <div className="col-span-2 h-0.5"></div>
            <SliderRow id="scale" label="缩放(S):" value="555" max={700} position={555} />
            <SliderRow id="depth" label="深度(D):" value="+100" max={126} position={100} />
            <span></span>
            <div className="flex h-[13px] items-center">
              <div className="w-[74px]"><CheckBox id="invert" label="反相(I)" /></div>
              <CheckBox id="link" label="与图层链接(K)" checked />
            </div>
          </div>
        </fieldset>
      </fieldset>

      <div className="mt-[6px] ml-[17px] flex flex-1 flex-col gap-[9px]">
        <DialogButton primary>确定</DialogButton>
        <DialogButton>取消</DialogButton>
        <DialogButton>新建样式(W)...</DialogButton>
        <div className="pl-5"><CheckBox id="preview" label="预览(V)" checked /></div>
        <div className="-mt-0.5 ml-4 grid size-[66px] place-items-center border border-[#999] border-r-white border-b-white bg-[#d6d6d6]">
          <svg width="31" height="31"><rect width="31" height="31" filter="url(#fabric-mid)" /></svg>
        </div>
      </div>
    </div>
  </div>
);

const Annotation = () => (
  <svg width="300" height="340" viewBox="490 400 300 340" className="pointer-events-none absolute top-[399px] left-[489px]" fill="none" stroke="#f00" strokeWidth="4">
    <rect x="502" y="408" width="28" height="70" />
    <path d="M774 729L530 447" strokeLinecap="round" strokeWidth="4.500" />
    <path d="M547 450l-18-7 4 22" />
    <path d="M526 441l15 6-9 9z" fill="#f00" strokeWidth="2" />
  </svg>
);

const Watermark = () => (
  <div className="pointer-events-none absolute right-[66px] bottom-[25px] w-[230px] text-white/75 [text-shadow:0_0_2px_#999]">
    <div className="flex h-20 items-end">
      <span className="font-['Inter',sans-serif] text-[50px] leading-[46px] font-bold">Bai</span>
      <span className="relative flex h-20 w-[66px] items-end justify-center">
        <svg viewBox="0 0 66 76" className="absolute inset-0 h-20 w-[66px]" fill="#fff" fillOpacity=".75" stroke="#bbb">
          <ellipse cx="9" cy="30" rx="8.500" ry="11" />
          <ellipse cx="25" cy="14" rx="8.500" ry="11.500" />
          <ellipse cx="45" cy="15" rx="8.500" ry="11.500" transform="rotate(12 45 15)" />
          <ellipse cx="57" cy="35" rx="8.500" ry="10.500" />
          <path d="M32 32c9 0 13 10 20 16 12 10 9 26-6 26-5 0-8-2-14-2s-9 2-14 2C4 74 1 58 12 48c7-6 11-16 20-16z" />
        </svg>
        <span className="relative font-['Inter',sans-serif] text-[34px] leading-10 font-medium text-[#bbb]">du</span>
      </span>
      <span className="ml-[5px] font-['Noto_Sans_CJK_SC',sans-serif] text-[39px] leading-[48px] font-bold">经验</span>
    </div>
    <div className="font-['Noto_Sans',sans-serif] text-[26px] leading-9">jingyan.baidu.com</div>
  </div>
);

const App = () => (
  <div className="relative flex h-screen min-h-[800px] flex-col overflow-hidden border border-b-2 border-[#56719a] bg-[#d6d6d6] px-[3px] pb-[3px] font-['Noto_Sans','Noto_Sans_CJK_SC',sans-serif] text-xs">
    <FabricFilters />
    <AppBar />
    <nav className="flex h-[23px] items-center gap-[17px] pl-2 text-[#222]">
      {MENUS.map((menu) => (
        <button key={menu} className="whitespace-nowrap">{menu}</button>
      ))}
    </nav>
    <div className="flex min-h-0 flex-1 flex-col border border-[#444]">
      <div className="flex h-[34px] shrink-0 items-center border-b border-[#8c8c8c]">
        <div className="ml-1 h-6 w-1 bg-[radial-gradient(#999_1px,transparent_1px)] bg-[size:3px_3px]"></div>
        <button aria-label="当前工具" className="ml-2 flex h-full items-center gap-1.5 border-r border-[#999] pr-2.5">
          <MoveGlyph />
          <svg width="5" height="3" viewBox="0 0 5 3"><path d="M0 0h5L2.500 3z" /></svg>
        </button>
        <div className="flex-1 pl-11 text-center text-[#a5a5a5] [text-shadow:1px_1px_0_#fff]">点按并拖移可调整纹理的位置。</div>
        <div className="mr-[254px] flex h-full flex-col justify-between py-1">
          <span className="h-1.5 w-px bg-[#999]"></span>
          <span className="h-1 w-px bg-[#999]"></span>
        </div>
      </div>
      <div className="flex min-h-0 flex-1">
        <Toolbox />
        <DocumentArea />
        <Dock />
      </div>
    </div>
    <LayerStyleDialog />
    <Annotation />
    <Watermark />
  </div>
);

export default App;
